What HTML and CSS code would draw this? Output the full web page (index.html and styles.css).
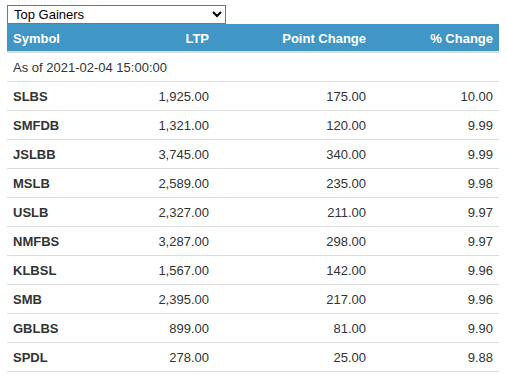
FILE: index.html
```html
<!DOCTYPE html>
<html>
<head>
<meta charset="utf-8">
<link rel="stylesheet" href="styles.css">
</head>
<body>
<div class="widget">
  <select class="picker">
    <option>Top Gainers</option>
    <option>Top Losers</option>
  </select>
  <table class="movers">
    <thead>
      <tr><th class="left">Symbol</th><th>LTP</th><th>Point Change</th><th>% Change</th></tr>
    </thead>
    <tbody>
      <tr class="asof"><td colspan="4">As of 2021-02-04 15:00:00</td></tr>
      <tr><td class="sym">SLBS</td><td>1,925.00</td><td>175.00</td><td>10.00</td></tr>
      <tr><td class="sym">SMFDB</td><td>1,321.00</td><td>120.00</td><td>9.99</td></tr>
      <tr><td class="sym">JSLBB</td><td>3,745.00</td><td>340.00</td><td>9.99</td></tr>
      <tr><td class="sym">MSLB</td><td>2,589.00</td><td>235.00</td><td>9.98</td></tr>
      <tr><td class="sym">USLB</td><td>2,327.00</td><td>211.00</td><td>9.97</td></tr>
      <tr><td class="sym">NMFBS</td><td>3,287.00</td><td>298.00</td><td>9.97</td></tr>
      <tr><td class="sym">KLBSL</td><td>1,567.00</td><td>142.00</td><td>9.96</td></tr>
      <tr><td class="sym">SMB</td><td>2,395.00</td><td>217.00</td><td>9.96</td></tr>
      <tr><td class="sym">GBLBS</td><td>899.00</td><td>81.00</td><td>9.90</td></tr>
      <tr><td class="sym">SPDL</td><td>278.00</td><td>25.00</td><td>9.88</td></tr>
    </tbody>
  </table>
</div>
</body>
</html>
```
FILE: styles.css
```css
html, body {
  margin: 0;
  padding: 0;
  background: #fff;
}
body {
  padding: 5px 8px 0 7px;
  font-family: "Liberation Sans", Arial, sans-serif;
  font-size: 13px;
  color: #333;
}
.widget {
  display: flex;
  flex-direction: column;
}
.picker {
  width: 219px;
  height: 19px;
  font-family: "Liberation Sans", Arial, sans-serif;
  font-size: 13px;
  color: #000;
  border: 1px solid #767676;
  border-radius: 0;
  padding: 0 0 0 2px;
  margin: 0;
  background: #fff;
  box-sizing: border-box;
}
.movers {
  width: 492px;
  border-collapse: collapse;
}
.movers th {
  background: #4096c4;
  color: #fff;
  font-weight: bold;
  text-align: right;
  height: 26px;
  padding: 1px 6px 0;
  border-bottom: 2px solid #ddd;
}
.movers th.left { text-align: left; }
.movers td {
  text-align: right;
  padding: 0 6px;
  height: 28px;
  border-top: 1px solid #ddd;
  border-bottom: 1px solid #ddd;
}
.movers tr.asof td {
  text-align: left;
  border-top: none;
}
.movers td.sym {
  text-align: left;
  font-weight: bold;
}
.movers th:nth-child(1) { width: 88px; }
.movers th:nth-child(2) { width: 96px; }
.movers th:nth-child(3) { width: 145px; }
```
